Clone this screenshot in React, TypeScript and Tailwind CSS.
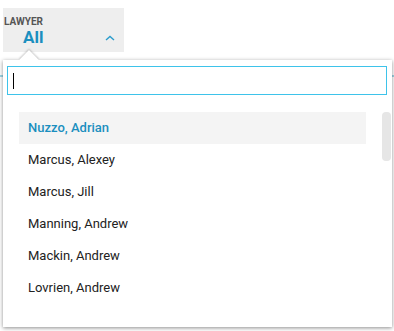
const lawyers = [
  "Nuzzo, Adrian",
  "Marcus, Alexey",
  "Marcus, Jill",
  "Manning, Andrew",
  "Mackin, Andrew",
  "Lovrien, Andrew",
];

export default function App() {
  return (
    <div className="relative h-[331px] w-[394px] overflow-hidden bg-white font-['Roboto',sans-serif]">
      {/* page line behind the dropdown */}
      <div className="absolute left-0 right-0 top-[75px] h-[2px] bg-[#9fd6e6]" />

      <div className="ml-[3px] pt-[8px]">
        <button className="flex h-[44px] w-[121px] flex-col items-start bg-[#eeeeee] pt-[9px] text-left">
          <span className="pl-[1px] text-[10px] font-bold leading-[10px] text-[#555555]">
            LAWYER
          </span>
          <div className="flex w-full items-center justify-between pl-[20px] pr-[9px]">
            <span className="text-[17px] font-bold leading-[20px] text-[#1b8fbf]">All</span>
            <svg width="10" height="6" viewBox="0 0 10 6" className="mt-[1px]">
              <path d="M1 5L5 1.5L9 5" fill="none" stroke="#2b9ccc" strokeWidth="1.4" />
            </svg>
          </div>
        </button>
      </div>

      <div className="absolute left-[3px] top-[60px] h-[267px] w-[389px] bg-white shadow-[0_1px_4px_rgba(0,0,0,0.45)]">
        <div className="absolute left-[19px] top-[-7px] h-[14px] w-[14px] rotate-45 bg-white shadow-[-1px_-1px_2px_rgba(0,0,0,0.2)]" />
        <div className="relative bg-white px-[4px] pt-[6px]">
          <div className="flex h-[29px] w-[380px] items-center border border-[#3ec3ea] bg-white pl-[5px]">
            <span className="h-[16px] w-[1px] bg-black" />
          </div>
        </div>
        <div className="mt-[17px] flex">
          <ul className="ml-[16px] w-[347px]">
            {lawyers.map((name, i) => (
              <li
                key={name}
                className={
                  i === 0
                    ? "flex h-[32px] items-center bg-[#f4f4f4] pl-[9px] text-[13px] font-medium text-[#1b8fbf]"
                    : "flex h-[32px] items-center pl-[9px] text-[13px] text-[#222222]"
                }
              >
                {name}
              </li>
            ))}
          </ul>
          <div className="ml-[16px] h-[49px] w-[9px] rounded-[4px] bg-[#e6e6e6]" />
        </div>
      </div>
    </div>
  );
}
